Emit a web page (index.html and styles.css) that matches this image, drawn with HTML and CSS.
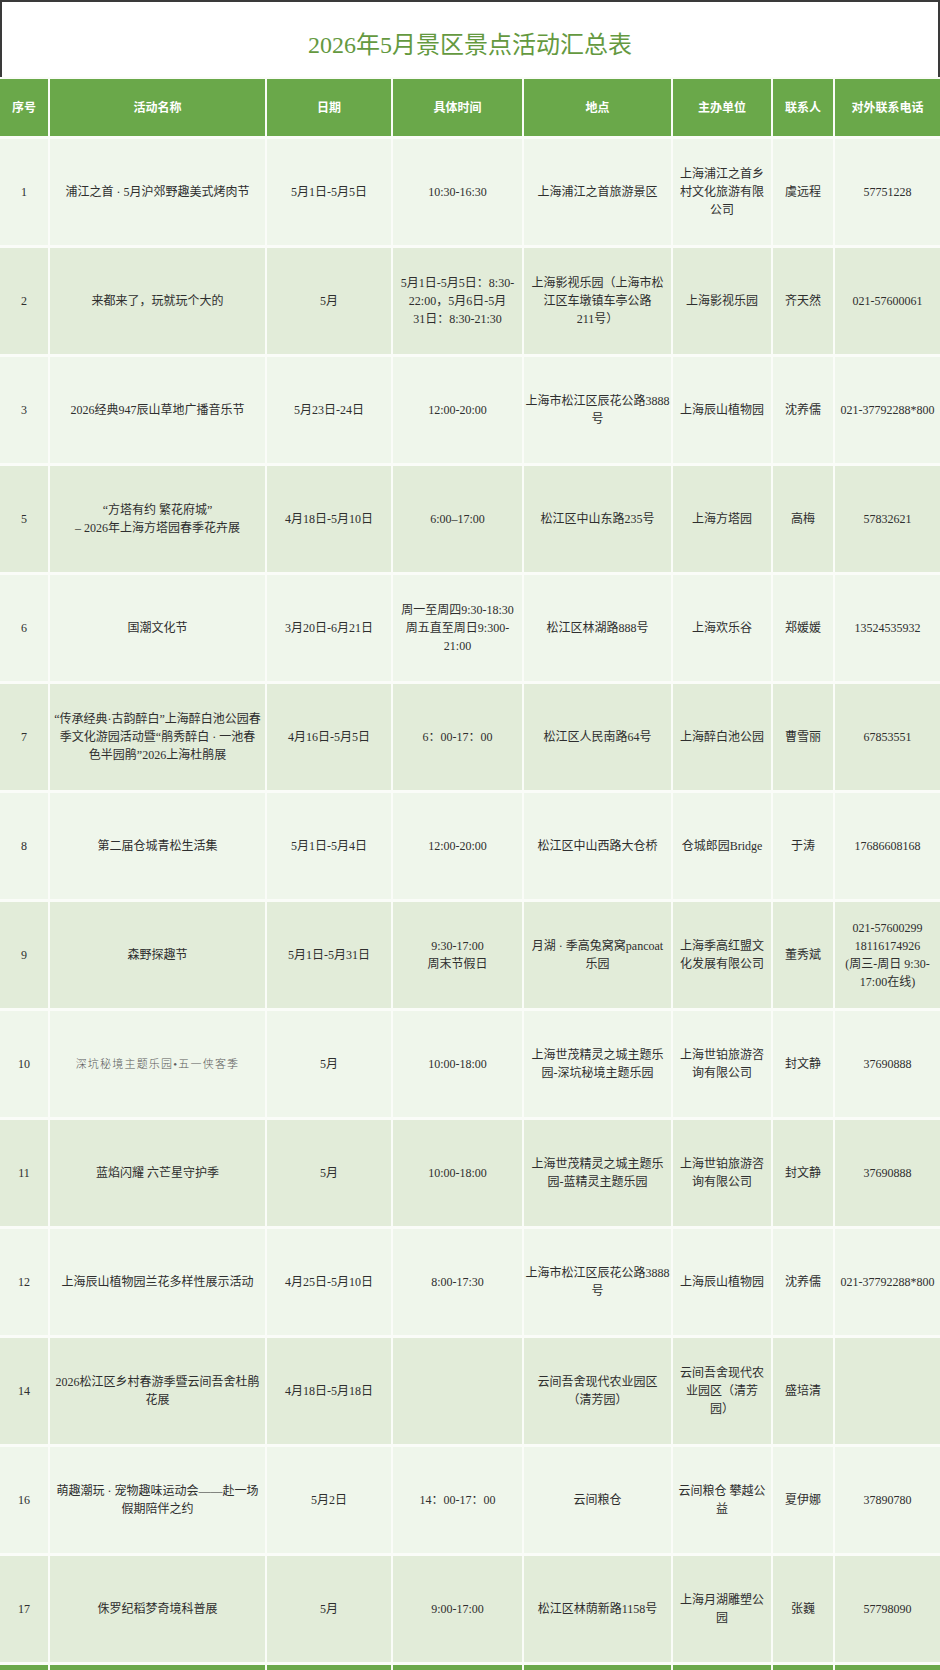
FILE: index.html
```html
<!DOCTYPE html>
<html lang="zh-CN">
<head>
<meta charset="utf-8">
<title>2026年5月景区景点活动汇总表</title>
<link rel="stylesheet" href="styles.css">
</head>
<body>
<div class="page">
  <div class="title-box">
    <h1 class="title">2026年5月景区景点活动汇总表</h1>
  </div>
  <div class="table">
    <div class="row head">
      <div class="cell">序号</div>
      <div class="cell">活动名称</div>
      <div class="cell">日期</div>
      <div class="cell">具体时间</div>
      <div class="cell">地点</div>
      <div class="cell">主办单位</div>
      <div class="cell">联系人</div>
      <div class="cell">对外联系电话</div>
    </div>

    <div class="row light">
      <div class="cell">1</div>
      <div class="cell">浦江之首 · 5月沪郊野趣美式烤肉节</div>
      <div class="cell">5月1日-5月5日</div>
      <div class="cell">10:30-16:30</div>
      <div class="cell">上海浦江之首旅游景区</div>
      <div class="cell">上海浦江之首乡<br>村文化旅游有限<br>公司</div>
      <div class="cell">虞远程</div>
      <div class="cell">57751228</div>
    </div>

    <div class="row dark">
      <div class="cell">2</div>
      <div class="cell">来都来了，玩就玩个大的</div>
      <div class="cell">5月</div>
      <div class="cell">5月1日-5月5日：8:30-<br>22:00，5月6日-5月<br>31日：8:30-21:30</div>
      <div class="cell">上海影视乐园（上海市松<br>江区车墩镇车亭公路<br>211号）</div>
      <div class="cell">上海影视乐园</div>
      <div class="cell">齐天然</div>
      <div class="cell">021-57600061</div>
    </div>

    <div class="row light">
      <div class="cell">3</div>
      <div class="cell">2026经典947辰山草地广播音乐节</div>
      <div class="cell">5月23日-24日</div>
      <div class="cell">12:00-20:00</div>
      <div class="cell">上海市松江区辰花公路3888<br>号</div>
      <div class="cell">上海辰山植物园</div>
      <div class="cell">沈养儒</div>
      <div class="cell">021-37792288*800</div>
    </div>

    <div class="row dark">
      <div class="cell">5</div>
      <div class="cell">“方塔有约 繁花府城”<br>– 2026年上海方塔园春季花卉展</div>
      <div class="cell">4月18日-5月10日</div>
      <div class="cell">6:00–17:00</div>
      <div class="cell">松江区中山东路235号</div>
      <div class="cell">上海方塔园</div>
      <div class="cell">高梅</div>
      <div class="cell">57832621</div>
    </div>

    <div class="row light">
      <div class="cell">6</div>
      <div class="cell">国潮文化节</div>
      <div class="cell">3月20日-6月21日</div>
      <div class="cell">周一至周四9:30-18:30<br>周五直至周日9:300-<br>21:00</div>
      <div class="cell">松江区林湖路888号</div>
      <div class="cell">上海欢乐谷</div>
      <div class="cell">郑媛媛</div>
      <div class="cell">13524535932</div>
    </div>

    <div class="row dark">
      <div class="cell">7</div>
      <div class="cell">“传承经典·古韵醉白”上海醉白池公园春<br>季文化游园活动暨“鹃秀醉白 · 一池春<br>色半园鹃”2026上海杜鹃展</div>
      <div class="cell">4月16日-5月5日</div>
      <div class="cell">6：00-17：00</div>
      <div class="cell">松江区人民南路64号</div>
      <div class="cell">上海醉白池公园</div>
      <div class="cell">曹雪丽</div>
      <div class="cell">67853551</div>
    </div>

    <div class="row light">
      <div class="cell">8</div>
      <div class="cell">第二届仓城青松生活集</div>
      <div class="cell">5月1日-5月4日</div>
      <div class="cell">12:00-20:00</div>
      <div class="cell">松江区中山西路大仓桥</div>
      <div class="cell">仓城郎园Bridge</div>
      <div class="cell">于涛</div>
      <div class="cell">17686608168</div>
    </div>

    <div class="row dark">
      <div class="cell">9</div>
      <div class="cell">森野探趣节</div>
      <div class="cell">5月1日-5月31日</div>
      <div class="cell">9:30-17:00<br>周末节假日</div>
      <div class="cell">月湖 · 季高兔窝窝pancoat<br>乐园</div>
      <div class="cell">上海季高红盟文<br>化发展有限公司</div>
      <div class="cell">董秀斌</div>
      <div class="cell">021-57600299<br>18116174926<br>(周三-周日 9:30-<br>17:00在线)</div>
    </div>

    <div class="row light">
      <div class="cell">10</div>
      <div class="cell thin">深坑秘境主题乐园•五一侠客季</div>
      <div class="cell">5月</div>
      <div class="cell">10:00-18:00</div>
      <div class="cell">上海世茂精灵之城主题乐<br>园-深坑秘境主题乐园</div>
      <div class="cell">上海世铂旅游咨<br>询有限公司</div>
      <div class="cell">封文静</div>
      <div class="cell">37690888</div>
    </div>

    <div class="row dark">
      <div class="cell">11</div>
      <div class="cell">蓝焰闪耀 六芒星守护季</div>
      <div class="cell">5月</div>
      <div class="cell">10:00-18:00</div>
      <div class="cell">上海世茂精灵之城主题乐<br>园-蓝精灵主题乐园</div>
      <div class="cell">上海世铂旅游咨<br>询有限公司</div>
      <div class="cell">封文静</div>
      <div class="cell">37690888</div>
    </div>

    <div class="row light">
      <div class="cell">12</div>
      <div class="cell">上海辰山植物园兰花多样性展示活动</div>
      <div class="cell">4月25日-5月10日</div>
      <div class="cell">8:00-17:30</div>
      <div class="cell">上海市松江区辰花公路3888<br>号</div>
      <div class="cell">上海辰山植物园</div>
      <div class="cell">沈养儒</div>
      <div class="cell">021-37792288*800</div>
    </div>

    <div class="row dark">
      <div class="cell">14</div>
      <div class="cell">2026松江区乡村春游季暨云间吾舍杜鹃<br>花展</div>
      <div class="cell">4月18日-5月18日</div>
      <div class="cell"></div>
      <div class="cell">云间吾舍现代农业园区<br>（清芳园）</div>
      <div class="cell">云间吾舍现代农<br>业园区（清芳<br>园）</div>
      <div class="cell">盛培清</div>
      <div class="cell"></div>
    </div>

    <div class="row light">
      <div class="cell">16</div>
      <div class="cell">萌趣潮玩 · 宠物趣味运动会——赴一场<br>假期陪伴之约</div>
      <div class="cell">5月2日</div>
      <div class="cell">14：00-17：00</div>
      <div class="cell">云间粮仓</div>
      <div class="cell">云间粮仓 攀越公<br>益</div>
      <div class="cell">夏伊娜</div>
      <div class="cell">37890780</div>
    </div>

    <div class="row dark">
      <div class="cell">17</div>
      <div class="cell">侏罗纪稻梦奇境科普展</div>
      <div class="cell">5月</div>
      <div class="cell">9:00-17:00</div>
      <div class="cell">松江区林荫新路1158号</div>
      <div class="cell">上海月湖雕塑公<br>园</div>
      <div class="cell">张巍</div>
      <div class="cell">57798090</div>
    </div>

    <div class="row foot">
      <div class="cell"></div><div class="cell"></div><div class="cell"></div><div class="cell"></div>
      <div class="cell"></div><div class="cell"></div><div class="cell"></div><div class="cell"></div>
    </div>
  </div>
</div>
</body>
</html>
```

FILE: styles.css
```css
html, body {
  margin: 0;
  padding: 0;
  background: #ffffff;
}

body {
  font-family: "Liberation Serif", "Noto Sans CJK SC", serif;
  color: #2e2e2e;
}

.page {
  width: 940px;
  background: #fafcf8;
}

.title-box {
  height: 77px;
  box-sizing: border-box;
  border: 2px solid #3a3a3a;
  border-bottom: none;
  background: #ffffff;
  display: flex;
  align-items: center;
  justify-content: center;
  margin-bottom: 2px;
}

.title {
  margin: 0;
  padding-top: 6px;
  font-size: 24px;
  font-weight: normal;
  color: #64993f;
  letter-spacing: 0;
}

.table {
  display: flex;
  flex-direction: column;
  gap: 3px;
}

.row {
  display: grid;
  grid-template-columns: 48px 215px 124px 129px 147px 98px 60px 105px;
  column-gap: 2px;
  height: 106px;
}

.cell {
  display: flex;
  align-items: center;
  justify-content: center;
  text-align: center;
  font-size: 12px;
  line-height: 18px;
  padding: 0 2px;
  white-space: nowrap;
  overflow: visible;
}

.row.head {
  height: 57px;
}

.row.head .cell {
  background: #6aa84a;
  color: #ffffff;
  font-size: 12px;
  font-weight: bold;
}

.row.light .cell {
  background: #eff6eb;
}

.row.dark .cell {
  background: #e2ecd9;
}

.row.foot {
  height: 20px;
}

.row.foot .cell {
  background: #6aa84a;
}

.cell.thin {
  font-size: 11px;
  letter-spacing: 1.2px;
  color: #5a5a5a;
  font-weight: 300;
}
```
